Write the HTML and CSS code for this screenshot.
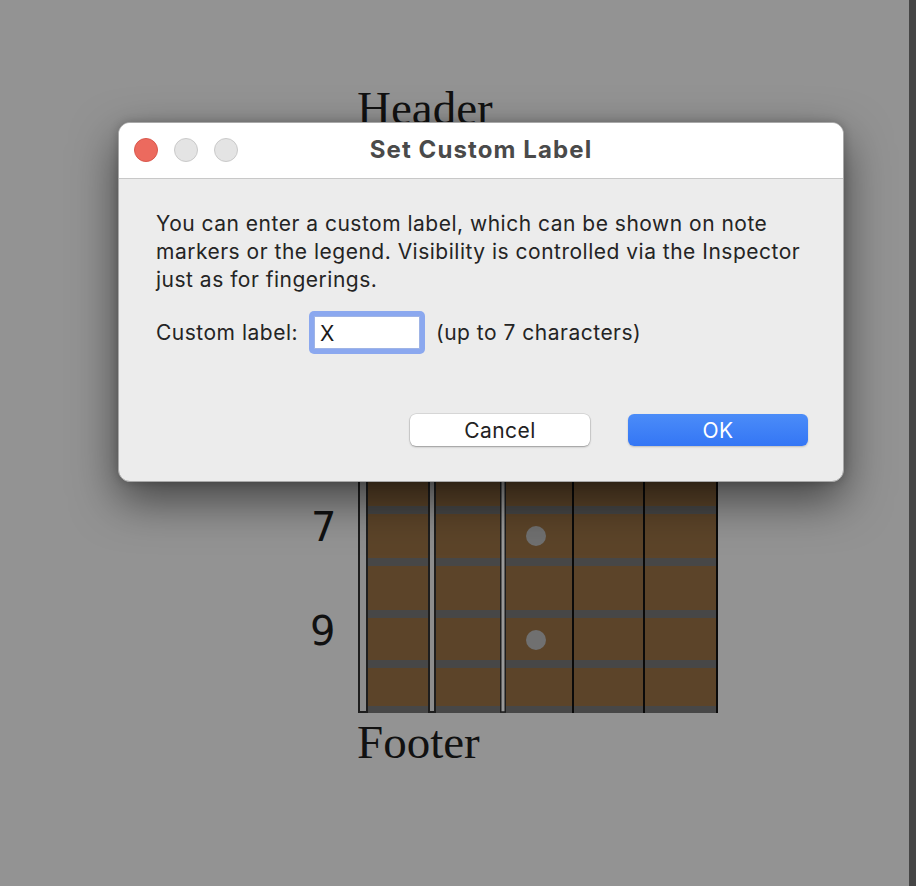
FILE: index.html
```html
<!DOCTYPE html>
<html lang="en">
<head>
    <meta charset="UTF-8">
    <meta name="viewport" content="width=device-width, initial-scale=1.0">
    <title>Set Custom Label</title>
    <link rel="stylesheet" href="styles.css">
</head>
<body>
    <div class="workspace">
        <div class="score">
            <div class="score-title">Header</div>
            <svg class="fretboard" width="420" height="579" viewBox="0 0 420 579">
                <rect x="68" y="0" width="349" height="579" fill="#5c4429"/>
                <g fill="#474747">
                    <rect x="68" y="8" width="349" height="8"/>
                    <rect x="68" y="60" width="349" height="8"/>
                    <rect x="68" y="112" width="349" height="8"/>
                    <rect x="68" y="164" width="349" height="8"/>
                    <rect x="68" y="216" width="349" height="8"/>
                    <rect x="68" y="268" width="349" height="8"/>
                    <rect x="68" y="320" width="349" height="8"/>
                    <rect x="68" y="372" width="349" height="8"/>
                    <rect x="68" y="424" width="349" height="8"/>
                    <rect x="68" y="476" width="349" height="8"/>
                    <rect x="68" y="526" width="349" height="8"/>
                    <rect x="68" y="572" width="349" height="7"/>
                </g>
                <circle cx="236" cy="402" r="10" fill="#707070"/>
                <circle cx="236" cy="506" r="10" fill="#707070"/>
                <!-- strings, thick to thin -->
                <rect x="59" y="-1" width="8" height="579" fill="#8d8d8d" stroke="#1e1e1e" stroke-width="2"/>
                <rect x="129" y="-1" width="6" height="579" fill="#8d8d8d" stroke="#1e1e1e" stroke-width="2"/>
                <rect x="200.75" y="-1" width="4.5" height="579" fill="#9a9a9a" stroke="#1e1e1e" stroke-width="1.5"/>
                <rect x="272" y="0" width="2" height="579" fill="#0a0a0a"/>
                <rect x="343" y="0" width="2" height="579" fill="#0a0a0a"/>
                <rect x="416" y="0" width="2" height="579" fill="#0a0a0a"/>
                <text class="fret-num" x="11" y="407">7</text>
                <text class="fret-num" x="10" y="511">9</text>
            </svg>
            <div class="score-title footer">Footer</div>
        </div>

        <div class="dialog">
            <div class="titlebar">
                <div class="lights">
                    <span class="light close"></span>
                    <span class="light"></span>
                    <span class="light"></span>
                </div>
                <div class="title">Set Custom Label</div>
            </div>
            <div class="dialog-body">
                <p class="message">You can enter a custom label, which can be shown on note markers or the legend. Visibility is controlled via the Inspector just as for fingerings.</p>
                <div class="field-row">
                    <label for="customLabel">Custom label:</label>
                    <div class="focus-ring">
                        <input type="text" id="customLabel" value="X">
                    </div>
                    <span class="hint">(up to 7 characters)</span>
                </div>
                <div class="buttons">
                    <button class="btn">Cancel</button>
                    <button class="btn primary">OK</button>
                </div>
            </div>
        </div>
    </div>
    <div class="edge"></div>
</body>
</html>
```

FILE: styles.css
```css
body {
    margin: 0;
    padding: 0;
    display: flex;
    height: 886px;
    background-color: #939393;
    font-family: Inter, "Noto Sans", sans-serif;
    overflow: hidden;
}

.workspace {
    flex: 1;
    position: relative;
}

.edge {
    width: 7px;
    background-color: #454545;
}

/* page behind the dialog */
.score {
    display: flex;
    flex-direction: column;
    align-items: flex-start;
    padding-top: 82px;
    padding-left: 300px;
}

.score-title {
    font-family: "Liberation Serif", serif;
    font-size: 47px;
    line-height: 52px;
    color: #111;
    padding-left: 57px;
}

.score-title.footer {
    margin-top: 3px;
}

.fretboard {
    display: block;
}

.fret-num {
    font-family: "DejaVu Sans", sans-serif;
    font-size: 40px;
    fill: #111;
}

/* dialog */
.dialog {
    position: absolute;
    left: 118px;
    top: 122px;
    width: 726px;
    height: 360px;
    box-sizing: border-box;
    border-radius: 12px;
    border: 1px solid #a9a9a9;
    background-color: #ececec;
    overflow: hidden;
    box-shadow: 0 18px 46px rgba(0, 0, 0, 0.55), 0 0 10px rgba(0, 0, 0, 0.2);
    display: flex;
    flex-direction: column;
}

.titlebar {
    height: 55px;
    background-color: #ffffff;
    border-bottom: 1px solid #c8c8c8;
    position: relative;
    display: flex;
    align-items: center;
    justify-content: center;
}

.lights {
    position: absolute;
    left: 15px;
    top: 15px;
    display: flex;
    gap: 16px;
}

.light {
    width: 22px;
    height: 22px;
    border-radius: 50%;
    background-color: #e4e4e4;
    border: 1px solid #cacaca;
}

.light.close {
    background-color: #ec6a5e;
    border-color: #d9584d;
}

.title {
    font-size: 24px;
    font-weight: 700;
    letter-spacing: 1.1px;
    color: #4a4a4a;
    margin-bottom: 3px;
}

.dialog-body {
    flex: 1;
    padding: 31px 35px 35px 37px;
    display: flex;
    flex-direction: column;
    color: #242424;
    font-size: 21px;
    letter-spacing: 0.5px;
}

.message {
    margin: 0;
    line-height: 28px;
}

.field-row {
    display: flex;
    align-items: center;
    margin-top: 17px;
}

.focus-ring {
    margin-left: 11px;
    width: 116px;
    height: 43px;
    box-sizing: border-box;
    border-radius: 5px;
    background-color: #8ba8ef;
    padding: 5px;
}

.focus-ring input {
    width: 100%;
    height: 100%;
    box-sizing: border-box;
    border: 1px solid #9fb4e6;
    background: #ffffff;
    outline: none;
    font-family: Inter, "Noto Sans", sans-serif;
    font-size: 21px;
    color: #1a1a1a;
    padding: 2px 5px 0;
}

.hint {
    margin-left: 11px;
}

.buttons {
    margin-top: auto;
    display: flex;
    justify-content: flex-end;
    gap: 38px;
}

.btn {
    width: 180px;
    height: 32px;
    border-radius: 6px;
    border: none;
    background: #ffffff;
    box-shadow: 0 0 0 0.5px rgba(0, 0, 0, 0.15), 0 1px 2px rgba(0, 0, 0, 0.3);
    font-family: Inter, "Noto Sans", sans-serif;
    font-size: 21px;
    letter-spacing: 0.4px;
    color: #222;
    padding: 0;
}

.btn.primary {
    background: linear-gradient(#4b8cf8, #3476f5);
    color: #ffffff;
    box-shadow: 0 1px 2px rgba(0, 0, 0, 0.2);
}
```
